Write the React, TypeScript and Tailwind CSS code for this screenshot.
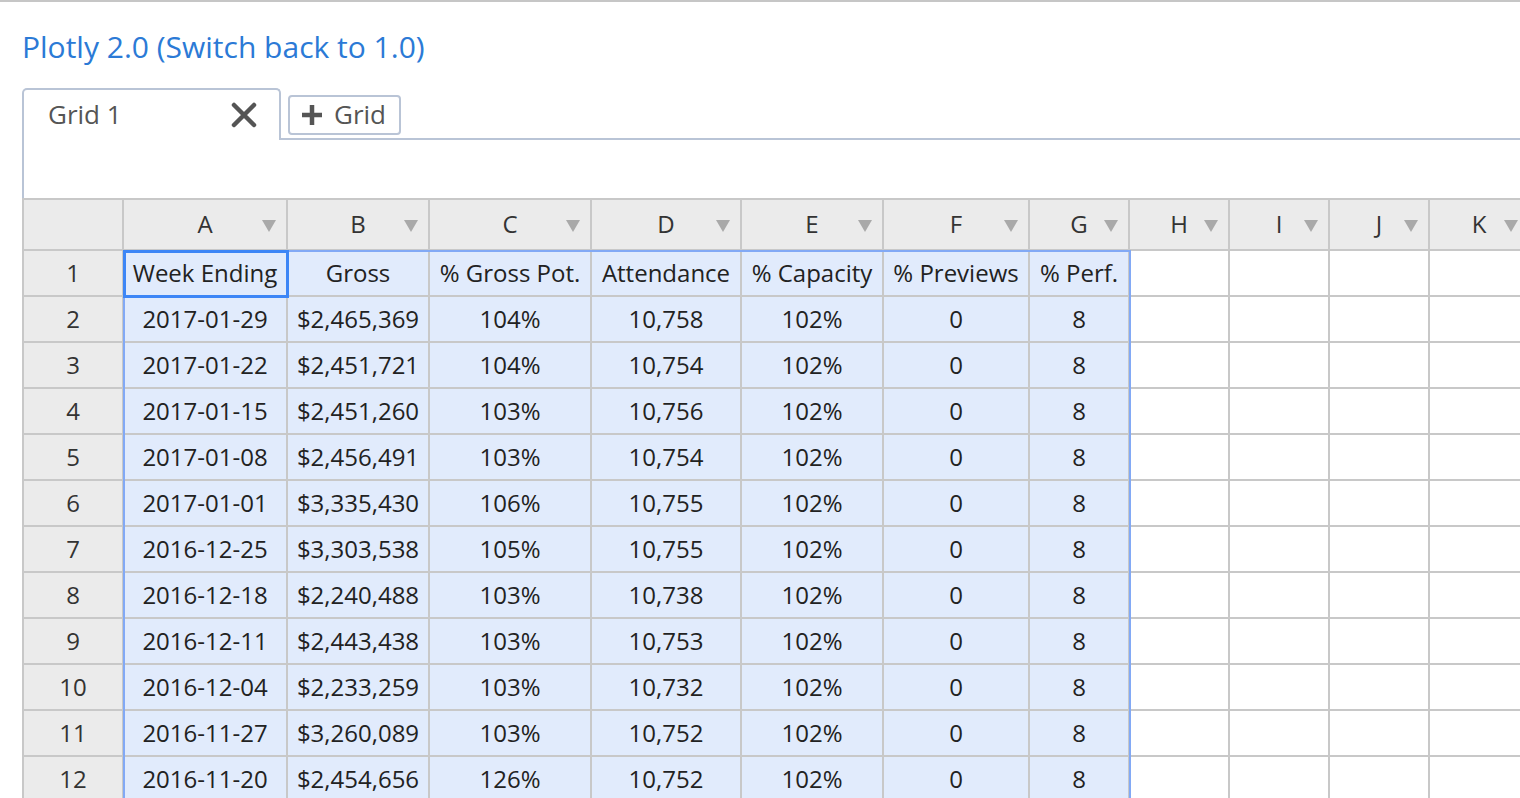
import React from "react";

const COLS = [
  { l: "A", w: 164 },
  { l: "B", w: 142 },
  { l: "C", w: 162 },
  { l: "D", w: 150 },
  { l: "E", w: 142 },
  { l: "F", w: 146 },
  { l: "G", w: 100 },
  { l: "H", w: 100 },
  { l: "I", w: 100 },
  { l: "J", w: 100 },
  { l: "K", w: 100 },
  { l: "L", w: 100 },
];

const DATA: string[][] = [
  ["Week Ending", "Gross", "% Gross Pot.", "Attendance", "% Capacity", "% Previews", "% Perf."],
  ["2017-01-29", "$2,465,369", "104%", "10,758", "102%", "0", "8"],
  ["2017-01-22", "$2,451,721", "104%", "10,754", "102%", "0", "8"],
  ["2017-01-15", "$2,451,260", "103%", "10,756", "102%", "0", "8"],
  ["2017-01-08", "$2,456,491", "103%", "10,754", "102%", "0", "8"],
  ["2017-01-01", "$3,335,430", "106%", "10,755", "102%", "0", "8"],
  ["2016-12-25", "$3,303,538", "105%", "10,755", "102%", "0", "8"],
  ["2016-12-18", "$2,240,488", "103%", "10,738", "102%", "0", "8"],
  ["2016-12-11", "$2,443,438", "103%", "10,753", "102%", "0", "8"],
  ["2016-12-04", "$2,233,259", "103%", "10,732", "102%", "0", "8"],
  ["2016-11-27", "$3,260,089", "103%", "10,752", "102%", "0", "8"],
  ["2016-11-20", "$2,454,656", "126%", "10,752", "102%", "0", "8"],
];

function Tri() {
  return (
    <svg width="14" height="12" viewBox="0 0 14 12" className="absolute right-[10px] top-[20px]">
      <polygon points="0,0 14,0 7,12" fill="#a9a9a9" />
    </svg>
  );
}

export default function App() {
  return (
    <div
      className="w-[1520px] h-[798px] overflow-hidden bg-white border-t-2 border-[#c6c6c6]"
      style={{ fontFamily: '"Open Sans", "Noto Sans", sans-serif' }}
    >
      <div className="pl-[22px]">
        <div className="pt-[24px] h-[86px]">
          <span className="text-[30px] leading-[41px] text-[#2b7ad6]">
            Plotly 2.0 (Switch back to 1.0)
          </span>
        </div>
        {/* tabs */}
        <div className="flex h-[52px]">
          <div className="w-[259px] h-[52px] border-2 border-b-0 border-[#b9c4d6] rounded-t-[5px] flex items-center pl-[24px] pr-[22px] bg-white">
            <span className="text-[26px] text-[#555] flex-1 -mt-[2px]">Grid 1</span>
            <svg width="26" height="26" viewBox="0 0 26 26" className="-mt-[1px]">
              <path d="M3 3 L23 23 M23 3 L3 23" stroke="#555" strokeWidth="4.5" strokeLinecap="round" />
            </svg>
          </div>
          <div className="flex-1 border-b-2 border-[#b9c4d6] pl-[7px] pt-[7px]">
            <div className="w-[113px] h-[40px] border-2 border-[#b9c4d6] rounded-[4px] flex items-center pl-[11px]">
              <svg width="22" height="22" viewBox="0 0 22 22">
                <path d="M11 1 V21 M1 11 H21" stroke="#555" strokeWidth="4.5" />
              </svg>
              <span className="text-[26px] text-[#555] ml-[11px] -mt-[1px]">Grid</span>
            </div>
          </div>
        </div>
        <div className="h-[58px] border-l-2 border-[#b9c4d6]" />
        {/* grid */}
        <div className="relative w-max border-l-2 border-t-2 border-[#c8c8c8] text-[24px]">
          <div className="flex h-[51px]">
            <div className="w-[100px] h-[51px] border-r-2 border-b-2 border-[#c8c8c8] bg-[#ebebeb] box-border" />
            {COLS.map((c) => (
              <div
                key={c.l}
                style={{ width: c.w }}
                className="relative h-[51px] border-r-2 border-b-2 border-[#c8c8c8] bg-[#ebebeb] box-border flex items-center justify-center text-[#333]"
              >
                <span className="-mt-[1px]">{c.l}</span>
                <Tri />
              </div>
            ))}
          </div>
          {DATA.map((row, r) => (
            <div key={r} className="flex h-[46px]">
              <div className="w-[100px] h-[46px] border-r-2 border-b-2 border-[#c8c8c8] bg-[#ebebeb] box-border flex items-center justify-center text-[#333]">
                {r + 1}
              </div>
              {COLS.map((c, ci) => (
                <div
                  key={c.l}
                  style={{ width: c.w }}
                  className={
                    "h-[46px] border-r-2 border-b-2 border-[#c8c8c8] box-border flex items-center justify-center text-[#222] whitespace-nowrap " +
                    (ci < 7 ? "bg-[#e1ebfc]" : "bg-white")
                  }
                >
                  {row[ci] ?? ""}
                </div>
              ))}
            </div>
          ))}
          {/* selection range */}
          <div className="absolute left-[99px] top-[50px] w-[1008px] h-[800px] border-2 border-[#82a9f5] pointer-events-none" />
          {/* active cell */}
          <div className="absolute left-[99px] top-[50px] w-[166px] h-[48px] border-[3px] border-[#3d86f6] pointer-events-none" />
        </div>
      </div>
    </div>
  );
}
